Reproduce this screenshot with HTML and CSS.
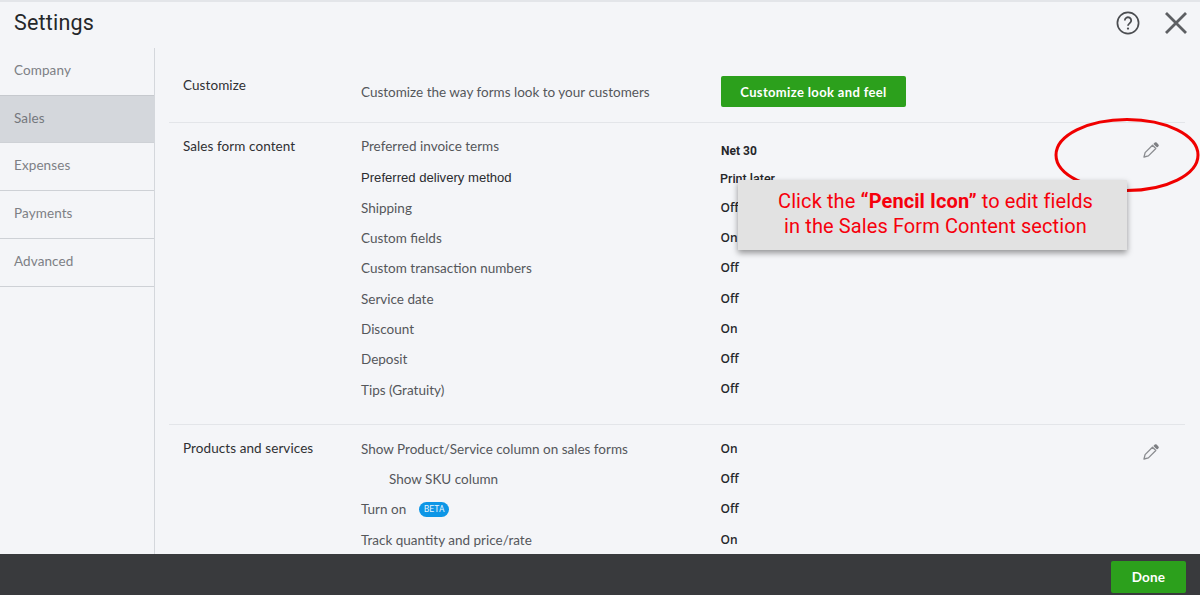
FILE: index.html
```html
<!DOCTYPE html>
<html lang="en">
<head>
<meta charset="utf-8">
<title>Settings</title>
<link rel="stylesheet" href="styles.css">
</head>
<body>
<div class="app">
  <header class="top">
    <h1 class="title">Settings</h1>
    <div class="top-icons">
      <svg class="help" viewBox="0 0 24 24" width="24" height="24"><circle cx="12" cy="12" r="10.6" fill="none" stroke="#4a4c50" stroke-width="1.7"/><path d="M8.8 9.4a3.2 3.2 0 1 1 5 2.7c-1.1.8-1.8 1.3-1.8 2.7" fill="none" stroke="#4a4c50" stroke-width="1.8"/><circle cx="12" cy="17.6" r="1.15" fill="#4a4c50"/></svg>
      <svg class="close" viewBox="0 0 24 24" width="24" height="24"><path d="M2 2L22 22M22 2L2 22" fill="none" stroke="#5d5f63" stroke-width="2.8"/></svg>
    </div>
  </header>
  <div class="body">
    <nav class="side">
      <a class="side-item">Company</a>
      <a class="side-item active">Sales</a>
      <a class="side-item">Expenses</a>
      <a class="side-item">Payments</a>
      <a class="side-item">Advanced</a>
    </nav>
    <main class="main">
      <section class="sec sec-custom">
        <div class="sec-label">Customize</div>
        <div class="custom-text">Customize the way forms look to your customers</div>
        <button class="btn btn-custom">Customize look and feel</button>
      </section>
      <section class="sec sec-form">
        <div class="sec-label">Sales form content</div>
        <div class="rows">
          <div class="row row-first"><span>Preferred invoice terms</span><span class="val val-net">Net 30</span></div>
          <div class="row row-second"><span class="arial">Preferred delivery method</span><span class="val val-print">Print later</span></div>
          <div class="row"><span>Shipping</span><span class="val">Off</span></div>
          <div class="row"><span>Custom fields</span><span class="val">On</span></div>
          <div class="row"><span>Custom transaction numbers</span><span class="val">Off</span></div>
          <div class="row"><span>Service date</span><span class="val">Off</span></div>
          <div class="row"><span>Discount</span><span class="val">On</span></div>
          <div class="row"><span>Deposit</span><span class="val">Off</span></div>
          <div class="row"><span>Tips (Gratuity)</span><span class="val val-up">Off</span></div>
        </div>
        <svg class="pencil" viewBox="0 0 16 16" width="16" height="16"><path d="M1 15l1.1-4.4 7.4-7.4 3.3 3.3-7.4 7.4z" fill="none" stroke="#8a8c90" stroke-width="1.3" stroke-linejoin="round"/><path d="M10.4 2l1.4-1.4a1.3 1.3 0 0 1 1.8 0l1.8 1.8a1.3 1.3 0 0 1 0 1.8L14 5.6z" fill="#7d7f83"/></svg>
      </section>
      <section class="sec sec-products">
        <div class="sec-label">Products and services</div>
        <div class="rows">
          <div class="row"><span>Show Product/Service column on sales forms</span><span class="val">On</span></div>
          <div class="row"><span class="indent">Show SKU column</span><span class="val">Off</span></div>
          <div class="row"><span class="turn">Turn on <em class="beta">BETA</em></span><span class="val val-up">Off</span></div>
          <div class="row"><span>Track quantity and price/rate</span><span class="val">On</span></div>
        </div>
        <svg class="pencil" viewBox="0 0 16 16" width="16" height="16"><path d="M1 15l1.1-4.4 7.4-7.4 3.3 3.3-7.4 7.4z" fill="none" stroke="#8a8c90" stroke-width="1.3" stroke-linejoin="round"/><path d="M10.4 2l1.4-1.4a1.3 1.3 0 0 1 1.8 0l1.8 1.8a1.3 1.3 0 0 1 0 1.8L14 5.6z" fill="#7d7f83"/></svg>
      </section>
    </main>
  </div>
  <footer class="foot"><button class="btn btn-done">Done</button></footer>
  <svg class="ring" viewBox="0 0 146 76" width="146" height="76"><ellipse cx="73" cy="38" rx="71" ry="35.5" fill="none" stroke="#f00000" stroke-width="3"/></svg>
  <div class="callout">Click the <strong>“Pencil Icon”</strong> to edit fields<br>in the Sales Form Content section</div>
</div>
</body>
</html>
```
FILE: styles.css
```css
* { box-sizing: border-box; }
html, body { margin: 0; height: 100%; overflow: hidden; }
body { background: #f4f5f8; color: #393a3d; font: 13.5px/20px Lato, "Open Sans", sans-serif; }
.app { position: relative; width: 1200px; height: 595px; display: flex; flex-direction: column; border-top: 2px solid #e3e5e9; overflow: hidden; }
.top { flex: none; height: 46px; display: flex; align-items: center; justify-content: space-between; padding: 0 12px 4px 14px; }
.title { margin: 0; font: 400 21.5px/28px Roboto, sans-serif; letter-spacing: 0.2px; color: #25272a; }
.top-icons { display: flex; align-items: center; gap: 24px; }
.body { flex: 1; min-height: 0; display: flex; }
.side { flex: none; width: 155px; border-right: 1px solid #d4d7dc; }
.side-item { display: flex; align-items: center; height: 48px; padding: 0 14px 3px; border-bottom: 1px solid #ced1d6; color: #7d8085; letter-spacing: 0.1px; }
.side-item.active { height: 48px; background: #d4d7dc; border-top: 1px solid #c6c9ce; margin-top: -1px; color: #74777c; }
.main { flex: 1; min-width: 0; padding: 0 15px 0 14px; overflow: hidden; }
.sec { position: relative; display: flex; border-bottom: 1px solid #e3e5e9; padding-left: 14px; }
.sec-label { flex: none; width: 178px; color: #2f3033; letter-spacing: 0.08px; }
.sec-custom { height: 75px; align-items: flex-start; }
.sec-custom .sec-label { margin-top: 27px; }
.custom-text { width: 360px; margin-top: 34px; color: #55575b; }
.btn { border: 0; color: #fff; font-family: Lato, sans-serif; font-weight: 700; border-radius: 2px; background: #2ca01c; }
.btn-custom { width: 185px; height: 31px; margin-top: 28px; font-size: 13px; letter-spacing: 0.35px; }
.sec-form { height: 302px; padding-top: 8px; }
.sec-form .sec-label { padding-top: 5px; }
.sec-products { padding-top: 9px; border: 0; }
.sec-products .sec-label { padding-top: 4px; }
.rows { flex: 1; }
.row { display: grid; grid-template-columns: 360px 1fr; align-items: center; height: 30.3px; color: #55575b; }
.row-first { margin-bottom: 2px; }
.row-second { margin-bottom: -1px; }
.val { margin-left: -0.5px; color: #26272a; font: 600 12px/20px "Open Sans", Lato, sans-serif; }
.val-up { padding-bottom: 2px; }
.val-net { margin-left: 0; padding: 10px 0 0; font: 700 12px/20px Roboto, sans-serif; }
.val-print { margin-left: -1px; padding: 2px 0 0; font: 500 12.5px/20px Roboto, sans-serif; }
.arial { font: 13.1px/20px "Liberation Sans", sans-serif; color: #2b2c2f; }
.indent { padding-left: 28px; }
.turn { display: flex; align-items: center; padding-bottom: 2px; }
.beta { display: flex; align-items: center; justify-content: center; width: 30px; height: 15px; margin-left: 13px; border-radius: 8px; background: #0d96e6; color: #e8f4fd; font: 400 8.5px/15px Roboto, sans-serif; position: relative; top: 1px; }
.pencil { position: absolute; right: 26px; top: 19px; }
.foot { flex: none; height: 41px; display: flex; justify-content: flex-end; align-items: flex-end; padding: 0 14px 2px 0; background: #393a3d; }
.btn-done { width: 75px; height: 32px; font-size: 13.5px; letter-spacing: 0.2px; }
.ring { position: absolute; left: 1054px; top: 115px; }
.callout { position: absolute; left: 738px; top: 178px; width: 389px; height: 70px; padding: 9px 0 0 6px; text-align: center; background: #e2e2e2; color: #f6000c; font: 400 20px/25px Roboto, sans-serif; letter-spacing: 0.1px; box-shadow: 0 3px 6px rgba(0,0,0,.4); }
.callout strong { font-weight: 700; }
```
